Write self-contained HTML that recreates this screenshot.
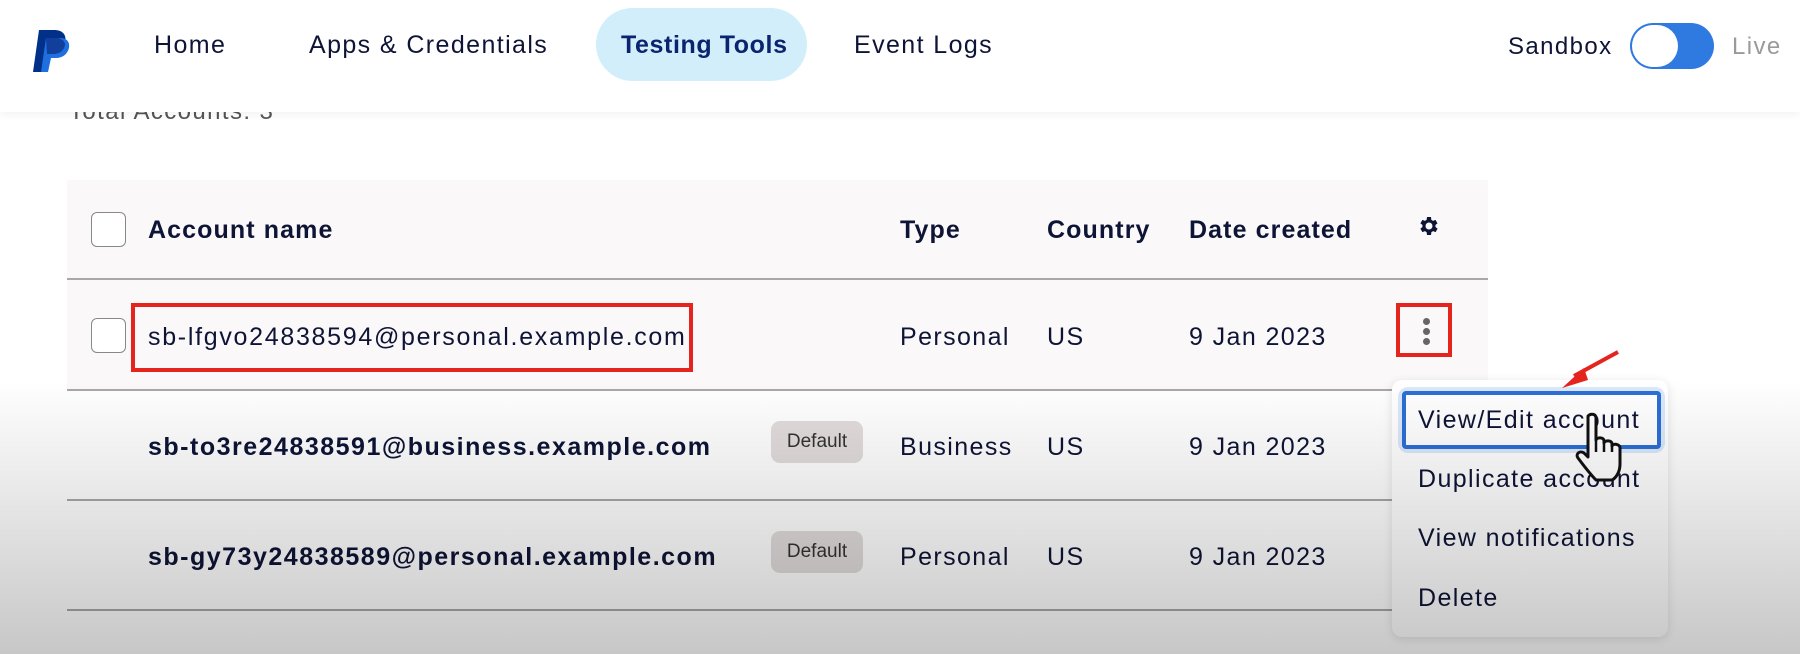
<!DOCTYPE html>
<html><head><meta charset="utf-8"><style>
*{margin:0;padding:0;box-sizing:border-box}
body{width:1800px;height:654px;overflow:hidden;background:#fff;font-family:"Liberation Sans",sans-serif;color:#0e1436;position:relative;letter-spacing:1.4px}
.a{position:absolute;white-space:nowrap}
.nav{font-size:25px;top:31px}
.t{font-size:25px}
.b{font-weight:bold}
.h{letter-spacing:1.1px}
.cb{position:absolute;width:35px;height:35px;border:1.5px solid #888;border-radius:6px;background:#fff}
.line{position:absolute;left:67px;height:2px;background:#a8a8a8}
.badge{position:absolute;left:771px;width:92px;height:42px;border-radius:9px;background:#e2dcdc;font-size:19px;color:#333;text-align:center;line-height:42px;letter-spacing:0}
</style></head><body>
<div class="a" style="left:69px;top:98px;font-size:24px;color:#555">Total Accounts: 3</div>
<div class="a" style="left:0;top:0;width:1800px;height:112px;background:#fff;box-shadow:0 3px 8px rgba(0,0,0,0.05)"></div>
<svg class="a" style="left:30px;top:28px" width="44" height="46" viewBox="0 0 44 46">
<path d="M9 2h15c9 0 13 5 11 13-2 8-8 11-15 11h-5l-3 18H3z" fill="#003087"/>
<path d="M16 10h14c7 0 10 4 9 10-2 7-7 10-13 10h-5l-3 14h-7z" fill="#1e6fe0"/>
<path d="M16 10h12c4 1 7 3 7 7-1 6-6 9-12 9h-6z" fill="#0a1f6e" opacity=".6"/>
</svg>
<div class="a nav" style="left:154px">Home</div>
<div class="a nav" style="left:309px">Apps &amp; Credentials</div>
<div class="a" style="left:596px;top:8px;width:211px;height:73px;border-radius:37px;background:#d1eefa"></div>
<div class="a nav b" style="left:621px;color:#0b2470;letter-spacing:0.6px">Testing Tools</div>
<div class="a nav" style="left:854px">Event Logs</div>
<div class="a" style="left:1508px;top:33px;font-size:24px">Sandbox</div>
<div class="a" style="left:1630px;top:23px;width:84px;height:46px;border-radius:23px;background:#2f7ae0"></div>
<div class="a" style="left:1632px;top:25px;width:46px;height:42px;border-radius:21px;background:#fff"></div>
<div class="a" style="left:1732px;top:33px;font-size:24px;color:#9a9a9a">Live</div>

<div class="a" style="left:67px;top:180px;width:1421px;height:209px;background:#faf8f8"></div>
<div class="cb" style="left:91px;top:212px"></div>
<div class="a t b h" style="left:148px;top:216px">Account name</div>
<div class="a t b h" style="left:900px;top:216px">Type</div>
<div class="a t b h" style="left:1047px;top:216px">Country</div>
<div class="a t b h" style="left:1189px;top:216px">Date created</div>
<svg class="a" style="left:1416px;top:214px" width="24" height="24" viewBox="0 0 24 24"><path fill="#0e1436" d="M19.4 13c.1-.3.1-.7.1-1s0-.7-.1-1l2.1-1.6-2-3.5-2.5 1c-.5-.4-1.1-.7-1.7-1L15 3h-4l-.4 2.9c-.6.3-1.200.6-1.700 1l-2.5-1-2 3.5L6.5 11c0 .3-.1.7-.1 1s0 .7.1 1l-2.1 1.6 2 3.5 2.5-1c.5.4 1.1.7 1.7 1L11 21h4l.4-2.9c.6-.3 1.2-.6 1.7-1l2.5 1 2-3.5zM13 15.5a3.5 3.5 0 110-7 3.5 3.5 0 010 7z"/></svg>
<div class="line" style="top:278px;width:1421px"></div>
<div class="cb" style="left:91px;top:318px"></div>
<div class="a t" style="left:148px;top:323px;letter-spacing:1.7px">sb-lfgvo24838594@personal.example.com</div>
<div class="a" style="left:131px;top:303px;width:562px;height:69px;border:4px solid #e5241d"></div>
<div class="a t" style="left:900px;top:323px">Personal</div>
<div class="a t" style="left:1047px;top:323px">US</div>
<div class="a t" style="left:1189px;top:323px">9 Jan 2023</div>
<div class="a" style="left:1396px;top:303px;width:56px;height:54px;border:4px solid #e5241d"></div>
<div class="a" style="left:1423px;top:318px;width:7px;height:7px;border-radius:50%;background:#666;box-shadow:0 10px 0 #666,0 20px 0 #666"></div>
<div class="line" style="top:389px;width:1421px"></div>
<div class="a t b" style="left:148px;top:433px;letter-spacing:1.5px">sb-to3re24838591@business.example.com</div>
<div class="badge" style="top:421px">Default</div>
<div class="a t" style="left:900px;top:433px">Business</div>
<div class="a t" style="left:1047px;top:433px">US</div>
<div class="a t" style="left:1189px;top:433px">9 Jan 2023</div>
<div class="line" style="top:499px;width:1330px"></div>
<div class="a t b" style="left:148px;top:543px;letter-spacing:1.5px">sb-gy73y24838589@personal.example.com</div>
<div class="badge" style="top:531px">Default</div>
<div class="a t" style="left:900px;top:543px">Personal</div>
<div class="a t" style="left:1047px;top:543px">US</div>
<div class="a t" style="left:1189px;top:543px">9 Jan 2023</div>
<div class="line" style="top:609px;width:1330px"></div>

<div class="a" style="left:1392px;top:380px;width:276px;height:257px;background:#fff;border-radius:10px;box-shadow:0 2px 10px rgba(0,0,0,0.12)"></div>
<div class="a" style="left:1398px;top:387px;width:267px;height:66px;border-radius:10px;background:#dbe7fb"></div>
<div class="a" style="left:1402px;top:391px;width:259px;height:58px;border:4px solid #2b6fd6;border-radius:4px;background:#fff"></div>
<div class="a t" style="left:1418px;top:406px">View/Edit account</div>
<div class="a t" style="left:1418px;top:465px">Duplicate account</div>
<div class="a t" style="left:1418px;top:524px">View notifications</div>
<div class="a t" style="left:1418px;top:584px">Delete</div>
<svg class="a" style="left:1540px;top:350px" width="80" height="70" viewBox="0 0 80 70"><path d="M78 2L34 26" stroke="#e5241d" stroke-width="4"/><path d="M22 38L44 18 48 30z" fill="#e5241d"/></svg>
<svg class="a" style="left:1572px;top:412px" width="60" height="74" viewBox="0 0 60 74"><path d="M16 4c3-3 8-2 8 2v22c1-3 8-3 8 1v2c1-3 8-3 8 1v2c1-3 8-2 8 2v16c0 8-4 14-8 16H24c-4-4-12-14-18-22-3-4 2-8 6-5l4 4z" fill="#fff" stroke="#111" stroke-width="3" stroke-linejoin="round"/><path d="M24 28v12M32 32v8M40 34v6" stroke="#111" stroke-width="2.5"/></svg>

<div class="a" style="left:0;top:380px;width:1800px;height:274px;background:linear-gradient(rgba(0,0,0,0),rgba(0,0,0,0.22));pointer-events:none"></div>
</body></html>
